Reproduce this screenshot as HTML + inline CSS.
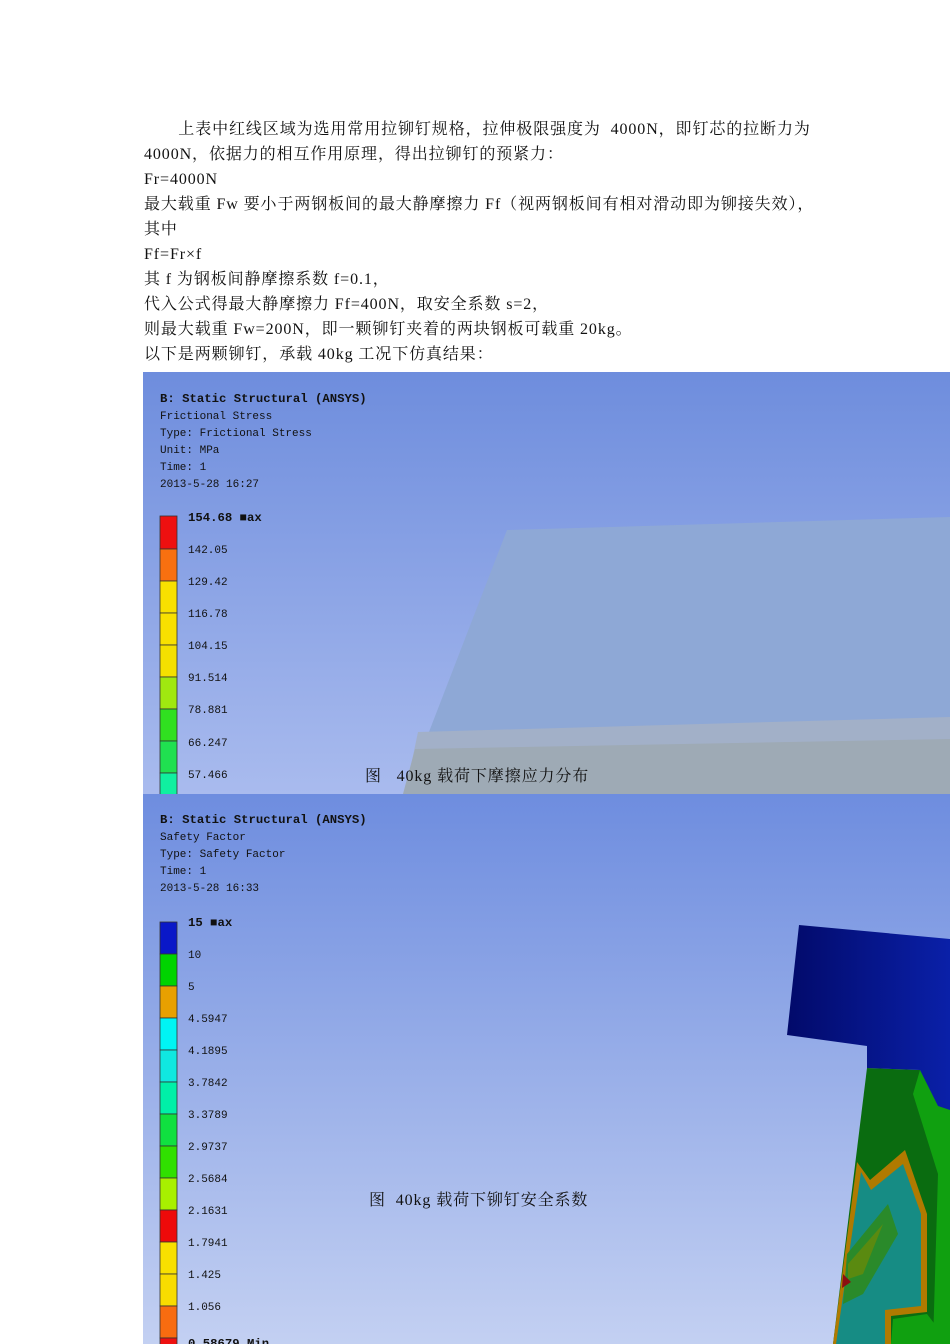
<!DOCTYPE html>
<html><head><meta charset="utf-8"><style>
body{margin:0;background:#fff;width:950px;height:1344px;position:relative;overflow:hidden;font-family:"Liberation Serif","Noto Serif CJK SC","Noto Sans CJK SC",serif;}
.t{position:absolute;left:144px;font-size:16px;line-height:25px;color:#111;white-space:nowrap;letter-spacing:0.9px;}
svg{position:absolute;left:143px;}
.m{font-family:"Liberation Mono","DejaVu Sans Mono",monospace;font-size:11px;fill:#111;}
.b{font-weight:bold;font-size:12.3px;}
.c{font-family:"Liberation Serif","Noto Serif CJK SC",serif;font-size:16px;fill:#111;letter-spacing:0.9px;}
</style></head><body>
<div class="t" style="top:117px;">&nbsp;&nbsp;&nbsp;&nbsp;&nbsp;&nbsp;&nbsp;上表中红线区域为选用常用拉铆钉规格，拉伸极限强度为&nbsp; 4000N，即钉芯的拉断力为</div>
<div class="t" style="top:142px;">4000N，依据力的相互作用原理，得出拉铆钉的预紧力：</div>
<div class="t" style="top:167px;">Fr=4000N</div>
<div class="t" style="top:192px;">最大载重 Fw 要小于两钢板间的最大静摩擦力 Ff（视两钢板间有相对滑动即为铆接失效），</div>
<div class="t" style="top:217px;">其中</div>
<div class="t" style="top:242px;">Ff=Fr×f</div>
<div class="t" style="top:267px;">其 f 为钢板间静摩擦系数 f=0.1，</div>
<div class="t" style="top:292px;">代入公式得最大静摩擦力 Ff=400N，取安全系数 s=2，</div>
<div class="t" style="top:317px;">则最大载重 Fw=200N，即一颗铆钉夹着的两块钢板可载重 20kg。</div>
<div class="t" style="top:342px;">以下是两颗铆钉，承载 40kg 工况下仿真结果：</div>

<svg style="top:372px" width="807" height="422" viewBox="0 0 807 422">
<defs><linearGradient id="g1" x1="0" y1="0" x2="0" y2="1"><stop offset="0" stop-color="#6e8ddd"/><stop offset="1" stop-color="#a9bbee"/></linearGradient></defs>
<rect width="807" height="422" fill="url(#g1)"/>
<polygon points="364,158 807,145 807,422 262,422" fill="#8ea8d6"/>
<polygon points="275,360 807,345 807,422 262,422" fill="#a2b0c8"/>
<polygon points="272,377 807,367 807,422 260,422" fill="#9eaab5"/>
<text class="m b" x="17" y="30">B: Static Structural (ANSYS)</text>
<text class="m" x="17" y="47">Frictional Stress</text>
<text class="m" x="17" y="64">Type: Frictional Stress</text>
<text class="m" x="17" y="81">Unit: MPa</text>
<text class="m" x="17" y="98">Time: 1</text>
<text class="m" x="17" y="115">2013-5-28 16:27</text>
<g stroke="#333" stroke-width="0.8">
<rect x="17" y="144" width="17" height="33" fill="#ee1010"/>
<rect x="17" y="177" width="17" height="32" fill="#f87010"/>
<rect x="17" y="209" width="17" height="32" fill="#f8e000"/>
<rect x="17" y="241" width="17" height="32" fill="#f8e000"/>
<rect x="17" y="273" width="17" height="32" fill="#f4e000"/>
<rect x="17" y="305" width="17" height="32" fill="#a0e810"/>
<rect x="17" y="337" width="17" height="32" fill="#30e020"/>
<rect x="17" y="369" width="17" height="32" fill="#20e050"/>
<rect x="17" y="401" width="17" height="30" fill="#10f0a0"/>
</g>
<text class="m b" x="45" y="149">154.68 ■ax</text>
<text class="m" x="45" y="181">142.05</text>
<text class="m" x="45" y="213">129.42</text>
<text class="m" x="45" y="245">116.78</text>
<text class="m" x="45" y="277">104.15</text>
<text class="m" x="45" y="309">91.514</text>
<text class="m" x="45" y="341">78.881</text>
<text class="m" x="45" y="374">66.247</text>
<text class="m" x="45" y="406">57.466</text>
<text class="c" x="222" y="409">图&nbsp;&nbsp;&nbsp;40kg 载荷下摩擦应力分布</text>
</svg>

<svg style="top:794px" width="807" height="550" viewBox="0 0 807 550">
<defs><linearGradient id="g2" x1="0" y1="0" x2="0" y2="1"><stop offset="0" stop-color="#6e8ddf"/><stop offset="1" stop-color="#c3d0f2"/></linearGradient>
<linearGradient id="bl" x1="0" y1="0" x2="1" y2="0"><stop offset="0" stop-color="#020a6a"/><stop offset="1" stop-color="#0a20a8"/></linearGradient></defs>
<rect width="807" height="550" fill="url(#g2)"/>
<polygon points="724,274 777,276 807,316 807,550 690,550" fill="#0a6c10"/>
<polygon points="777,276 807,316 807,550 790,550 795,380 770,300" fill="#10a010"/>
<polygon points="714,368 727,386 762,356 784,420 784,518 748,522 748,550 690,550" fill="#b07a00"/>
<polygon points="718,378 728,396 760,370 778,420 778,512 742,516 742,550 693,550" fill="#168c84"/>
<polygon points="704,460 745,410 755,440 720,500 700,510" fill="#2a8a2a"/>
<polygon points="705,470 740,430 720,480 705,485" fill="#5a8a10"/>
<polygon points="700,480 708,488 699,494" fill="#8a1010"/>
<polygon points="750,525 784,520 807,550 748,550" fill="#10a010"/>
<polygon points="656,131 807,145 807,316 795,312 777,276 724,274 724,252 644,241" fill="url(#bl)"/>
<text class="m b" x="17" y="29">B: Static Structural (ANSYS)</text>
<text class="m" x="17" y="46">Safety Factor</text>
<text class="m" x="17" y="63">Type: Safety Factor</text>
<text class="m" x="17" y="80">Time: 1</text>
<text class="m" x="17" y="97">2013-5-28 16:33</text>
<g stroke="#333" stroke-width="0.8">
<rect x="17" y="128" width="17" height="32" fill="#0a18c8"/>
<rect x="17" y="160" width="17" height="32" fill="#00d400"/>
<rect x="17" y="192" width="17" height="32" fill="#e8a000"/>
<rect x="17" y="224" width="17" height="32" fill="#00f4f4"/>
<rect x="17" y="256" width="17" height="32" fill="#10e8e0"/>
<rect x="17" y="288" width="17" height="32" fill="#00f0a8"/>
<rect x="17" y="320" width="17" height="32" fill="#10e040"/>
<rect x="17" y="352" width="17" height="32" fill="#30e000"/>
<rect x="17" y="384" width="17" height="32" fill="#a8f000"/>
<rect x="17" y="416" width="17" height="32" fill="#ee0a0a"/>
<rect x="17" y="448" width="17" height="32" fill="#f8e000"/>
<rect x="17" y="480" width="17" height="32" fill="#f8dc00"/>
<rect x="17" y="512" width="17" height="32" fill="#f86c10"/>
<rect x="17" y="544" width="17" height="10" fill="#ee1010"/>
</g>
<text class="m b" x="45" y="132">15 ■ax</text>
<text class="m" x="45" y="164">10</text>
<text class="m" x="45" y="196">5</text>
<text class="m" x="45" y="228">4.5947</text>
<text class="m" x="45" y="260">4.1895</text>
<text class="m" x="45" y="292">3.7842</text>
<text class="m" x="45" y="324">3.3789</text>
<text class="m" x="45" y="356">2.9737</text>
<text class="m" x="45" y="388">2.5684</text>
<text class="m" x="45" y="420">2.1631</text>
<text class="m" x="45" y="452">1.7941</text>
<text class="m" x="45" y="484">1.425</text>
<text class="m" x="45" y="516">1.056</text>
<text class="m b" x="45" y="553">0.58679 Min</text>
<text class="c" x="226" y="411">图&nbsp; 40kg 载荷下铆钉安全系数</text>
</svg>
</body></html>
